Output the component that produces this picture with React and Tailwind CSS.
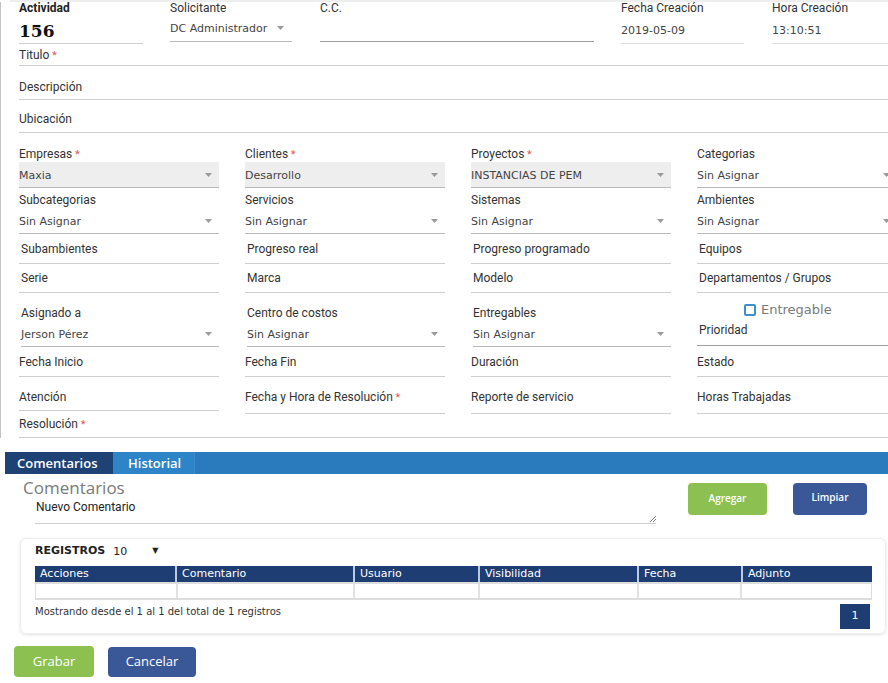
import React from 'react';

const Arrow = () => (
  <svg width="7" height="4" viewBox="0 0 7 4" className="shrink-0">
    <path d="M0 0h7L3.5 4z" fill="#9a9a9a" />
  </svg>
);

const Req = () => <span className="text-[#e0575b] text-[11px]"> *</span>;

const SelectField = ({ label, value, req, gray, shift }) => (
  <div className={shift ? 'pl-[2px]' : ''}>
    <div className="h-[16px] leading-[16px] text-[12px] text-[#333]">
      {label}
      {req && <Req />}
    </div>
    <div
      className={`h-[26px] flex items-center justify-between pr-[7px] border-b border-[#b9b9b9] ${gray ? 'bg-[#eeeeee]' : ''}`}
    >
      <span className="pt-[3px] font-['DejaVu_Sans'] text-[11px] text-[#444]">{value}</span>
      <Arrow />
    </div>
  </div>
);

const TextField = ({ label, req, h, pad }) => (
  <div className={`border-b border-[#cfcfcf] text-[12px] text-[#333] leading-[16px] ${h} ${pad}`}>
    {label}
    {req && <Req />}
  </div>
);

const Btn = ({ children, className }) => (
  <button className={`rounded-[4px] text-white font-['Open_Sans'] ${className}`}>{children}</button>
);

const columns = [
  { name: 'Acciones', w: 'w-[140px]' },
  { name: 'Comentario', w: 'w-[178px]' },
  { name: 'Usuario', w: 'w-[125px]' },
  { name: 'Visibilidad', w: 'w-[159px]' },
  { name: 'Fecha', w: 'w-[104px]' },
  { name: 'Adjunto', w: 'w-[131px]' },
];

export default function App() {
  return (
    <div className="w-[888px] h-[683px] overflow-hidden bg-white font-['Roboto',sans-serif] text-[#333]">
      <div className="ml-[10px] h-[2px] bg-[#eeeeee]" />

      {/* Formulario */}
      <div className="border-l border-[#c4c4c4] pl-[18px] w-[1000px]">
        {/* fila superior */}
        <div className="flex items-start">
          <div className="w-[124px]">
            <div className="h-[12px] leading-[12px] text-[12px] font-bold text-[#222]">Actividad</div>
            <div className="h-[30px] pt-[6px] flex items-center border-b border-[#cfcfcf] font-['DejaVu_Serif',serif] font-bold text-[17px] text-[#111]">
              156
            </div>
          </div>
          <div className="w-[122px] ml-[27px]">
            <div className="h-[12px] leading-[12px] text-[12px]">Solicitante</div>
            <div className="h-[28px] flex items-center justify-between pr-[8px] border-b border-[#b9b9b9]">
              <span className="pt-[3px] font-['DejaVu_Sans'] text-[11px] text-[#444]">DC Administrador</span>
              <Arrow />
            </div>
          </div>
          <div className="w-[274px] ml-[28px]">
            <div className="h-[12px] leading-[12px] text-[12px]">C.C.</div>
            <div className="h-[28px] border-b border-[#9e9e9e]" />
          </div>
          <div className="w-[123px] ml-[27px]">
            <div className="h-[12px] leading-[12px] text-[12px]">Fecha Creación</div>
            <div className="h-[30px] pt-[6px] flex items-center border-b border-[#dcdcdc] font-['DejaVu_Sans'] text-[11px] text-[#444]">
              2019-05-09
            </div>
          </div>
          <div className="w-[130px] ml-[28px]">
            <div className="h-[12px] leading-[12px] text-[12px]">Hora Creación</div>
            <div className="h-[30px] pt-[6px] flex items-center border-b border-[#dcdcdc] font-['DejaVu_Sans'] text-[11px] text-[#444]">
              13:10:51
            </div>
          </div>
        </div>

        <div className="w-[870px]">
          <TextField label="Titulo" req h="h-[22px]" pad="pt-[3px]" />
          <TextField label="Descripción" h="h-[34px]" pad="pt-[13px]" />
          <TextField label="Ubicación" h="h-[33px]" pad="pt-[11px]" />
        </div>

        {/* rejilla de 4 columnas */}
        <div className="grid grid-cols-[200px_200px_200px_200px] gap-x-[26px] items-start mt-[13px]">
          <SelectField label="Empresas" value="Maxia" req gray />
          <SelectField label="Clientes" value="Desarrollo" req gray />
          <SelectField label="Proyectos" value="INSTANCIAS DE PEM" req gray />
          <SelectField label="Categorias" value="Sin Asignar" />
        </div>
        <div className="grid grid-cols-[200px_200px_200px_200px] gap-x-[26px] items-start mt-[4px]">
          <SelectField label="Subcategorias" value="Sin Asignar" />
          <SelectField label="Servicios" value="Sin Asignar" />
          <SelectField label="Sistemas" value="Sin Asignar" />
          <SelectField label="Ambientes" value="Sin Asignar" />
        </div>
        <div className="grid grid-cols-[200px_200px_200px_200px] gap-x-[26px] items-start">
          {['Subambientes', 'Progreso real', 'Progreso programado', 'Equipos'].map((l) => (
            <div key={l} className="h-[30px] flex items-center pl-[2px] border-b border-[#cfcfcf] text-[12px]">
              {l}
            </div>
          ))}
        </div>
        <div className="grid grid-cols-[200px_200px_200px_200px] gap-x-[26px] items-start">
          {['Serie', 'Marca', 'Modelo', 'Departamentos / Grupos'].map((l) => (
            <div key={l} className="h-[29px] flex items-center pl-[2px] border-b border-[#cfcfcf] text-[12px]">
              {l}
            </div>
          ))}
        </div>
        <div className="grid grid-cols-[200px_200px_200px_200px] gap-x-[26px] items-start mt-[12px]">
          <SelectField label="Asignado a" value="Jerson Pérez" shift />
          <SelectField label="Centro de costos" value="Sin Asignar" shift />
          <SelectField label="Entregables" value="Sin Asignar" shift />
          <div className="-mt-[4px]">
            <div className="h-[18px] flex items-center pl-[47px] gap-[5px]">
              <span className="w-[12px] h-[12px] border-2 border-[#3d8fd1] rounded-[2px]" />
              <span className="font-['DejaVu_Sans'] text-[13px] text-[#7a7a7a]">Entregable</span>
            </div>
            <div className="h-[27px] pt-[3px] pl-[2px] leading-[16px] border-b border-[#9e9e9e] text-[12px]">Prioridad</div>
          </div>
        </div>
        <div className="grid grid-cols-[200px_200px_200px_200px] gap-x-[26px] items-start">
          {['Fecha Inicio', 'Fecha Fin', 'Duración', 'Estado'].map((l) => (
            <div key={l} className="h-[30px] flex items-center border-b border-[#cfcfcf] text-[12px]">
              {l}
            </div>
          ))}
        </div>
        <div className="grid grid-cols-[200px_200px_200px_200px] gap-x-[26px] items-start">
          <TextField label="Atención" h="h-[34px]" pad="pt-[12px] border-[#9e9e9e]" />
          <TextField label="Fecha y Hora de Resolución" req h="h-[37px]" pad="pt-[12px]" />
          <TextField label="Reporte de servicio" h="h-[37px]" pad="pt-[12px]" />
          <TextField label="Horas Trabajadas" h="h-[37px]" pad="pt-[12px]" />
        </div>
        <div className="w-[870px]">
          <TextField label="Resolución" req h="h-[24px]" pad="pt-[2px]" />
        </div>
      </div>

      {/* Pestañas */}
      <div className="mt-[14px] ml-[5px] h-[22px] bg-[#2a7bbd] flex font-['Open_Sans'] font-semibold text-[13px] text-white">
        <div className="w-[108px] pl-[12px] bg-[#1e4274] leading-[22px]">Comentarios</div>
        <div className="w-[82px] pl-[15px] bg-[#2d84c6] border-r border-[#3a8cd0] leading-[22px]">Historial</div>
      </div>

      {/* Comentarios */}
      <div className="flex items-start">
        <div className="w-[656px] pl-[23px] pt-[4px]">
          <div className="h-[20px] leading-[20px] font-['Open_Sans'] text-[17px] text-[#7a7a7a]">Comentarios</div>
          <div className="ml-[12px] h-[26px] relative border-b border-[#cfcfcf] text-[12px] text-[#222] pl-[1px] pt-[1px] leading-[16px]">
            Nuevo Comentario
            <svg width="7" height="7" viewBox="0 0 7 7" className="absolute right-[0px] bottom-[1px]">
              <path d="M1 7L7 1M4 7L7 4" stroke="#777" strokeWidth="1" />
            </svg>
          </div>
        </div>
        <div className="flex gap-[26px] mt-[9px] ml-[32px]">
          <Btn className="w-[79px] h-[32px] bg-[#8cc152] text-[10px] font-semibold pb-[2px]">Agregar</Btn>
          <Btn className="w-[74px] h-[32px] bg-[#3a5897] text-[10px] font-semibold pb-[3px]">Limpiar</Btn>
        </div>
      </div>

      {/* Tabla de registros */}
      <div className="mt-[14px] ml-[20px] w-[866px] h-[96px] rounded-[6px] border border-[#eeeeee] shadow-[0_1px_3px_rgba(0,0,0,0.12)] pl-[14px] pt-[5px] font-['DejaVu_Sans']">
        <div className="h-[14px] flex items-center text-[11px] text-[#222]">
          <span className="font-bold">REGISTROS</span>
          <span className="ml-[8px] mt-[2px]">10</span>
          <span className="ml-[25px] text-[8px]">▼</span>
        </div>
        <div className="mt-[8px] w-[837px]">
          <div className="flex h-[16px] bg-[#1e3d73] text-white text-[11px] leading-[16px]">
            {columns.map((c, i) => (
              <div key={c.name} className={`${c.w} pl-[5px] ${i > 0 ? 'border-l-2 border-[#b9cbe3]' : ''}`}>
                {c.name}
              </div>
            ))}
          </div>
          <div className="flex h-[18px] border-t-2 border-[#dddddd] border-b-2 border-x">
            {columns.map((c, i) => (
              <div key={c.name} className={`${c.w} ${i > 0 ? 'border-l-2 border-[#e2e2e2]' : ''}`} />
            ))}
          </div>
        </div>
        <div className="flex justify-between items-start w-[837px]">
          <span className="mt-[4px] text-[10px] text-[#333]">Mostrando desde el 1 al 1 del total de 1 registros</span>
          <div className="mt-[4px] mr-[2px] w-[30px] h-[25px] bg-[#1e3d73] text-white text-[11px] flex items-center justify-center">
            1
          </div>
        </div>
      </div>

      {/* Acciones */}
      <div className="flex items-start gap-[14px] ml-[14px] mt-[12px]">
        <Btn className="w-[80px] h-[31px] bg-[#8cc152] text-[13px]">Grabar</Btn>
        <Btn className="w-[88px] h-[30px] mt-[1px] bg-[#3a5897] text-[13px]">Cancelar</Btn>
      </div>
    </div>
  );
}
